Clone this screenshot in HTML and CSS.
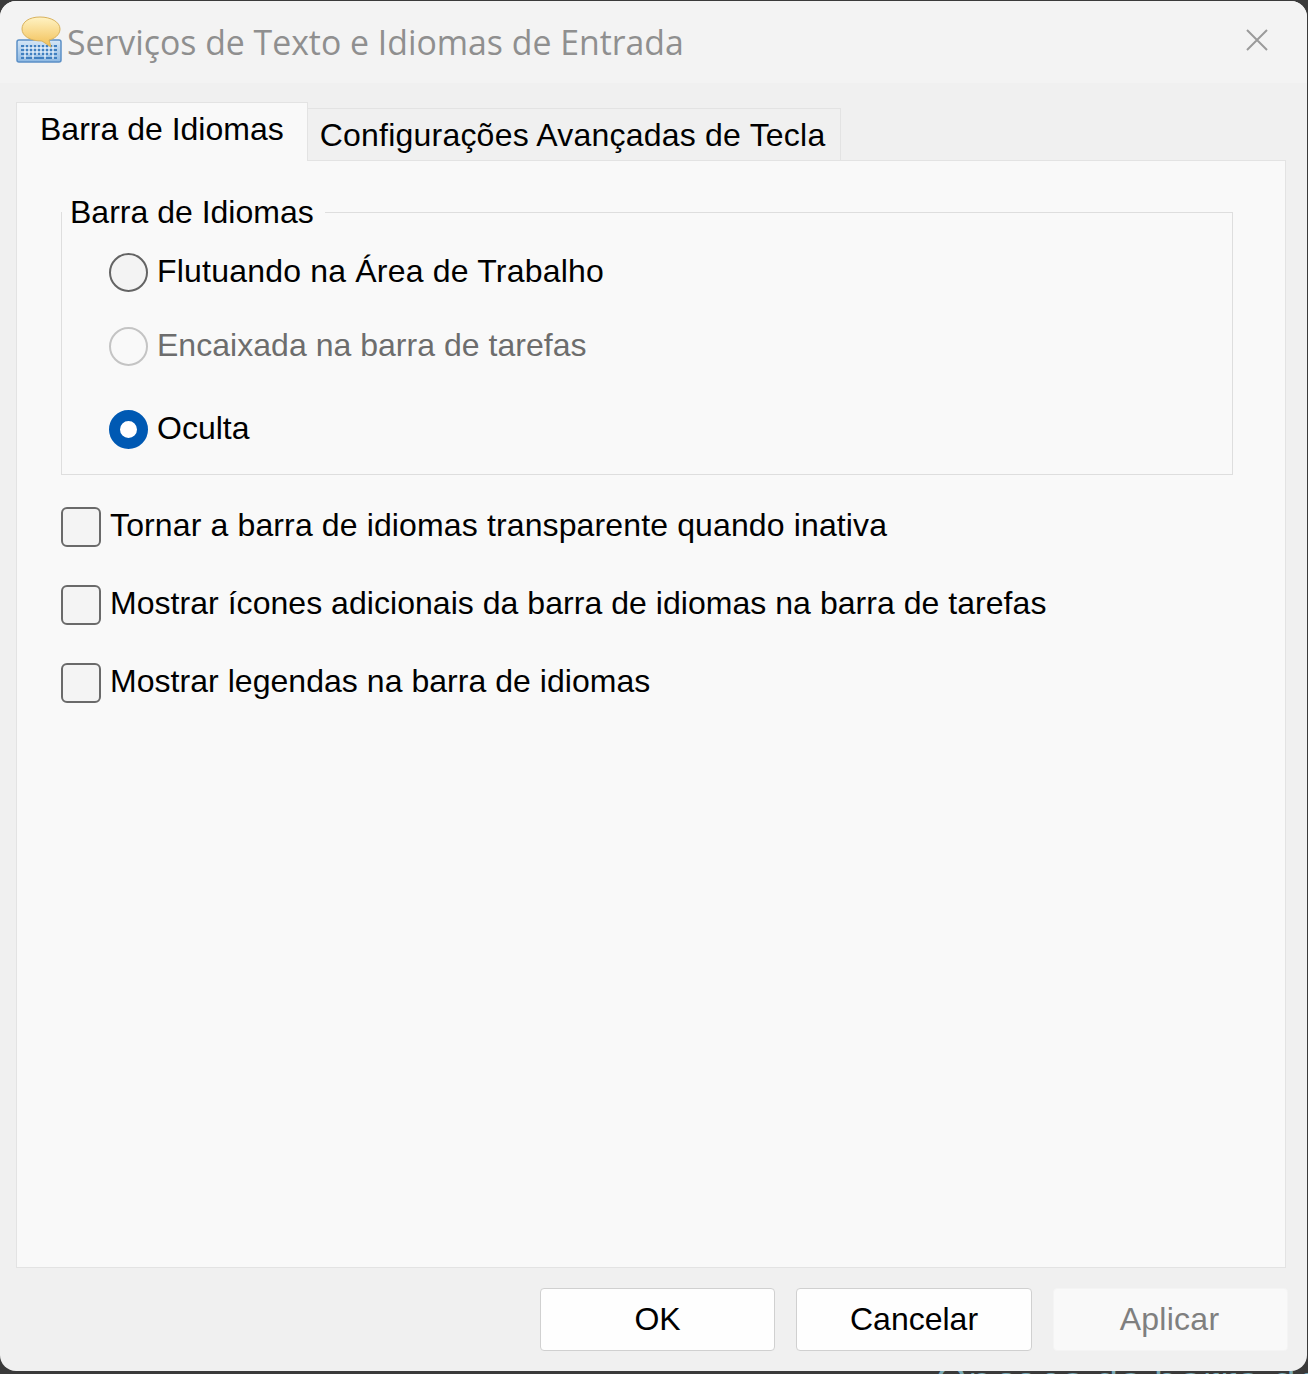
FILE: index.html
```html
<!DOCTYPE html>
<html lang="pt-BR">

<head>
    <meta charset="UTF-8">
    <title>Serviços de Texto e Idiomas de Entrada</title>
    <link rel="stylesheet" href="styles.css">
</head>

<body>
    <div class="window">
        <div class="titlebar">
            <svg class="app-icon" width="48" height="48" viewBox="0 0 48 48">
                <defs>
                    <linearGradient id="bubble" x1="0" y1="0" x2="0" y2="1">
                        <stop offset="0" stop-color="#fff3c4"/>
                        <stop offset="1" stop-color="#f2bf55"/>
                    </linearGradient>
                    <linearGradient id="keys" x1="0" y1="0" x2="0" y2="1">
                        <stop offset="0" stop-color="#d5e6f6"/>
                        <stop offset="1" stop-color="#8db8e2"/>
                    </linearGradient>
                </defs>
                <rect x="1" y="24" width="44" height="22" rx="2" fill="url(#keys)" stroke="#5b8fc6" stroke-width="1.5"/>
                <path d="M5 30H41M5 34H41M5 38H41M5 42H41" stroke="#3f7fc0" stroke-width="2"/>
                <path d="M9 29V43M13 29V39M17 29V43M21 29V39M25 29V39M29 29V43M33 29V39M37 29V43" stroke="#e8f1fa" stroke-width="1.4"/>
                <path d="M24 1C35 1 44 6 44 13C44 19 38 23 33 24L35 31L26 25C14 25 6 20 6 13C6 6 13 1 24 1Z" fill="url(#bubble)" stroke="#d9b25c" stroke-width="1"/>
            </svg>
            <span class="title">Serviços de Texto e Idiomas de Entrada</span>
            <svg class="close" width="22" height="22" viewBox="0 0 22 22">
                <path d="M1 1L21 21M21 1L1 21" stroke="#9a9a9a" stroke-width="2" fill="none"/>
            </svg>
        </div>

        <div class="content">
            <div class="tabs">
                <div class="tab tab-active">Barra de Idiomas</div>
                <div class="tab tab-wide">Configurações Avançadas de Tecla</div>
            </div>

            <div class="pane">
                <fieldset class="group">
                    <legend>Barra de Idiomas</legend>
                    <div class="option option-first"><span class="radio"></span><span class="label">Flutuando na Área de Trabalho</span></div>
                    <div class="option option-disabled"><span class="radio"></span><span class="label">Encaixada na barra de tarefas</span></div>
                    <div class="option option-last"><span class="radio radio-on"></span><span class="label">Oculta</span></div>
                </fieldset>

                <div class="check-row check-row-wide"><span class="check"></span><span class="label">Tornar a barra de idiomas transparente quando inativa</span></div>
                <div class="check-row"><span class="check"></span><span class="label">Mostrar ícones adicionais da barra de idiomas na barra de tarefas</span></div>
                <div class="check-row"><span class="check"></span><span class="label">Mostrar legendas na barra de idiomas</span></div>
            </div>

            <div class="buttons">
                <button class="btn">OK</button>
                <button class="btn btn-cancel">Cancelar</button>
                <button class="btn btn-disabled">Aplicar</button>
            </div>
        </div>
    </div>
    <!-- what shows of the page behind the dialog, cut off by the screen edge -->
    <div class="behind"><span>Opções da barra de</span></div>
</body>

</html>
```
FILE: styles.css
```css
html, body {
    height: 100%;
}

body {
    margin: 0;
    background-color: #3a3a3a;
    font-family: "Liberation Sans", Arial, sans-serif;
    font-size: 32px;
    color: #000;
    overflow: hidden;
}

.window {
    box-sizing: border-box;
    width: 1307px;
    height: 1370px;
    margin-top: 1px;
    background-color: #f0f0f0;
    border-radius: 16px;
    overflow: hidden;
}

.titlebar {
    display: flex;
    align-items: center;
    height: 82px;
    padding-left: 16px;
    padding-right: 39px;
    background-color: #f3f3f3;
}

.app-icon {
    margin-top: -4px;
    flex: none;
}

.title {
    flex: 1;
    margin-left: 3px;
    font-family: "Open Sans", "Noto Sans", sans-serif;
    font-size: 33.8px;
    color: #8f8f8f;
}

.close {
    margin-top: -4px;
}

.content {
    padding: 19px 21px 0 16px;
}

.tabs {
    display: flex;
    align-items: flex-end;
    height: 58px;
}

.tab {
    box-sizing: border-box;
    height: 52px;
    padding: 8px 15px 0 12px;
    background-color: #f0f0f0;
    border: 1px solid #e3e3e3;
    border-left: none;
    border-bottom: none;
}

.tab-wide {
    letter-spacing: 0.22px;
}

.tab-active {
    position: relative;
    z-index: 1;
    height: 59px;
    margin-bottom: -1px;
    padding: 8px 23px 0 23px;
    background-color: #f9f9f9;
    border-left: 1px solid #e3e3e3;
}

.pane {
    box-sizing: border-box;
    height: 1108px;
    padding: 33px 52px 0 44px;
    background-color: #f9f9f9;
    border: 1px solid #e3e3e3;
}

.group {
    box-sizing: border-box;
    height: 281px;
    margin: 0 0 32px;
    padding: 0 0 0 47px;
    border: 1px solid #dedede;
}

.group legend {
    margin-left: -47px;
    padding: 0 11px 0 8px;
    line-height: 36px;
}

.option {
    display: flex;
    align-items: center;
    height: 40px;
    gap: 9px;
}

.option .label {
    margin-top: -2px;
}

.option-first {
    margin-top: 22px;
    letter-spacing: 0.2px;
}

.option-disabled {
    margin-top: 34px;
    color: #6d6d6d;
    letter-spacing: 0.03px;
}

.option-last {
    margin-top: 43px;
}

.radio {
    box-sizing: border-box;
    width: 39px;
    height: 39px;
    border: 2px solid #646464;
    border-radius: 50%;
    background-color: #f3f3f3;
}

.option-disabled .radio {
    border-color: #c4c4c4;
    background-color: #f9f9f9;
}

.radio-on {
    border: 11.5px solid #0059b3;
    background-color: #fff;
}

.check-row {
    display: flex;
    align-items: center;
    height: 40px;
    gap: 9px;
    margin-bottom: 38px;
    letter-spacing: 0.04px;
}

.check-row .label {
    margin-top: -4px;
}

.check-row-wide {
    letter-spacing: 0.13px;
}

.check {
    box-sizing: border-box;
    width: 40px;
    height: 40px;
    border: 2px solid #6a6a6a;
    border-radius: 6px;
    background-color: #f4f4f4;
}

.buttons {
    display: flex;
    justify-content: flex-end;
    gap: 21px;
    margin-top: 20px;
    margin-right: -2px;
}

.btn {
    box-sizing: border-box;
    width: 235px;
    height: 63px;
    padding: 0;
    font: inherit;
    color: #000;
    background-color: #fefefe;
    border: 1px solid #d0d0d0;
    border-radius: 4px;
}

.btn-cancel {
    width: 236px;
}

.btn-disabled {
    padding-right: 2px;
    color: #7f7f7f;
    background-color: #f9f9f9;
    border-color: #f4f4f4;
    letter-spacing: 0.25px;
}

.behind {
    height: 3px;
    padding-left: 935px;
    overflow: hidden;
    font-family: "Open Sans", "Noto Sans", sans-serif;
    font-size: 42px;
    line-height: 42px;
    color: #7aa9b5;
    white-space: nowrap;
}

.behind span {
    display: block;
    margin-top: -12px;
}
```
